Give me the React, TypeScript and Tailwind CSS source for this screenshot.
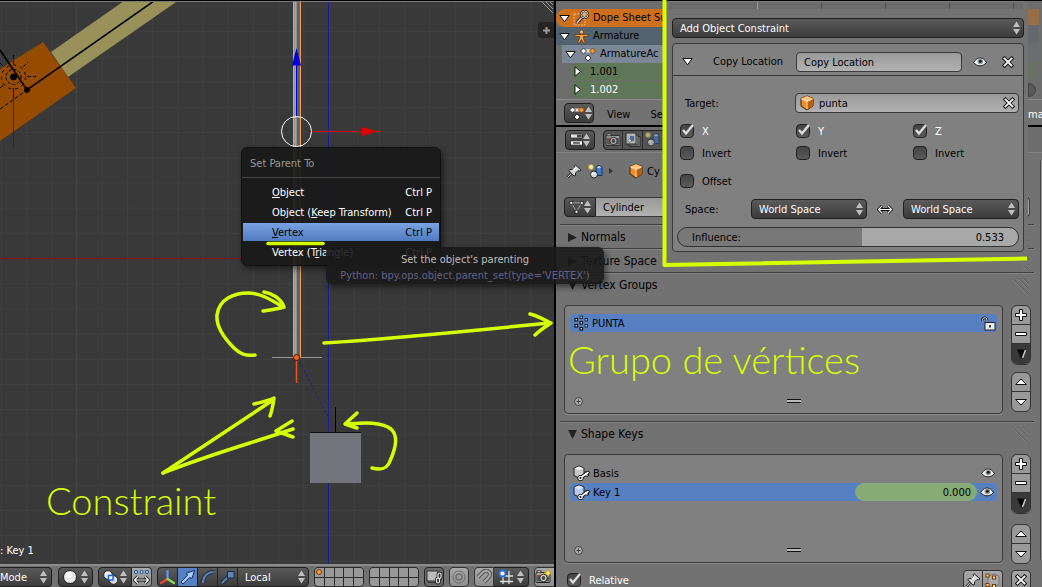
import type { ReactNode } from "react";

const FIELD = "rounded border border-[#3a3a3a] bg-linear-to-b from-[#999] to-[#b2b2b2] pt-px text-black";
const DARK = "rounded border border-[#1f1f1f] bg-linear-to-b from-[#5a5a5a] to-[#3c3c3c] text-white";
const LIGHT = "rounded border border-[#333] bg-linear-to-b from-[#a9a9a9] to-[#8e8e8e]";

function UpDown() {
  return (
    <svg width="7" height="14" viewBox="0 0 7 14" className="pointer-events-none shrink-0" fill="#c0c0c0">
      <path d="M0 6 3.5 0.5 7 6zM0 8h7L3.5 13.5z" />
    </svg>
  );
}

function Cube({ fill = "#f08a24", top = "#ffc27a", side = "#b85f0c" }: { fill?: string; top?: string; side?: string }) {
  return (
    <svg width="14" height="16" viewBox="0 0 14 16" className="shrink-0" stroke="#3a2208" strokeWidth="1" strokeLinejoin="round">
      <path d="M7 1 13 3.5V11L7 15 1 11V3.5z" fill={fill} />
      <path d="M7 1 13 3.5 7 6.5 1 3.5z" fill={top} stroke="none" />
      <path d="M7 6.5 13 3.8V11L7 15z" fill={side} stroke="none" />
      <path d="M1.5 4 7 6.5 12.5 4M7 6.5V14" stroke="#fff0dc" strokeWidth=".9" fill="none" />
    </svg>
  );
}

function ShapeKeyIcon({ blue }: { blue?: boolean }) {
  return (
    <svg width="17" height="17" viewBox="0 0 17 17" className="shrink-0" strokeLinejoin="round">
      <path d="M6 1 11 3V10L6 13 1 10.500V3z" fill={blue ? "#b9c9ea" : "#c9c9c9"} stroke="#222" />
      <path d="M6 1.500 10.500 3.300 6 5.500 1.500 3.300z" fill={blue ? "#dbe6fa" : "#eee"} />
      <path d="M8 12.500 15 7.500M13 8 14.500 10" stroke="#111" strokeWidth="3.400" strokeLinecap="round" />
      <circle cx="7.500" cy="13" r="3" fill="#111" />
      <path d="M8 12.500 15 7.500M12.500 8.500 14 10" stroke="#fff" strokeWidth="1.600" strokeLinecap="round" />
      <circle cx="7.500" cy="13" r="1.700" fill="#111" stroke="#fff" strokeWidth="1.300" />
    </svg>
  );
}

function Eye() {
  return (
    <svg width="14" height="10" viewBox="0 0 14 10" className="shrink-0">
      <path d="M.7 5.500C3 1.800 5 1 7.200 1 10 1 12 3 13.500 5.500 11.500 7.800 9.500 8.800 7 8.800 4.500 8.800 2.500 7.800.7 5.500z" fill="#f2f2f2" stroke="#222" />
      <circle cx="7.300" cy="4.500" r="2.800" fill="#8b9499" />
      <circle cx="7.300" cy="4.300" r="1.400" fill="#111" />
    </svg>
  );
}

function Cross() {
  return (
    <svg width="12" height="12" viewBox="0 0 12 12" className="shrink-0" strokeLinecap="square">
      <path d="M2.500 2.500 9.500 9.500M9.500 2.500 2.500 9.500" stroke="#111" strokeWidth="3.800" />
      <path d="M2.500 2.500 9.500 9.500M9.500 2.500 2.500 9.500" stroke="#f4f4f4" strokeWidth="1.900" />
    </svg>
  );
}

function Pin() {
  return (
    <svg width="17" height="16" viewBox="0 0 17 16" className="shrink-0" stroke="#222" strokeLinejoin="round">
      <path d="M1.500 14.500 6 9.500" strokeWidth="2.400" />
      <path d="M1.500 14.500 6 9.500" stroke="#eee" strokeWidth="1" />
      <path d="M9 1.500 15 7 13.500 8 12 7.500 9.500 10 9.500 12.500 8 13 2.800 7.500 4 6.500 6.500 6.700 9 4.300 8.200 2.500z" fill="#d8d8d8" />
      <path d="M9.500 4.500 7 7.200" stroke="#fff" strokeWidth="1.400" />
    </svg>
  );
}

function SceneIcon() {
  return (
    <svg width="15" height="15" viewBox="0 0 15 15" className="shrink-0">
      <circle cx="3" cy="3" r="2.500" fill="#f3ee9a" stroke="#a89e30" strokeWidth=".8" />
      <path d="M8 3 11 1.500 14 3V11.500H8z" fill="#3f78c8" stroke="#16325d" />
      <path d="M8.500 3.200 11 2 13.500 3.200 11 4.500z" fill="#b8d4f8" />
      <circle cx="6" cy="10.500" r="3.500" fill="#ddd" stroke="#222" />
      <circle cx="5" cy="9.300" r="1.300" fill="#fff" />
    </svg>
  );
}

function CameraIcon({ spark }: { spark?: boolean }) {
  return (
    <svg width="17" height="16" viewBox="0 0 17 16" className="shrink-0">
      <rect x="1" y="3.500" width="14" height="10" rx="1" fill="#b9b9b9" stroke="#222" />
      <rect x="2" y="1.800" width="4" height="2" fill="#e6e6e6" stroke="#222" strokeWidth=".8" />
      <rect x="2" y="6" width="12" height="6.500" fill="#555" />
      <circle cx="8.500" cy="9" r="3.700" fill="#ddd" stroke="#222" />
      <circle cx="8.500" cy="9" r="1.900" fill="#444" />
      <circle cx="3.500" cy="6.500" r=".9" fill="#d33" />
      {spark && <path d="M13 0 14.200 2.800 17 4 14.200 5.200 13 8 11.800 5.200 9 4 11.800 2.800z" fill="#ffe45a" stroke="#c59310" strokeWidth=".6" />}
    </svg>
  );
}

function KeysIcon() {
  return (
    <svg width="16" height="16" viewBox="0 0 16 16" className="shrink-0" stroke="#222" strokeWidth=".9">
      <path d="M3 5H12" stroke="#e8e0d0" strokeWidth="3" />
      <path d="M3.500 2 6.500 5 3.500 8 .5 5z" fill="#fff" />
      <path d="M12.500 2 15.500 5 12.500 8 9.500 5z" fill="#f39a3c" stroke="#7a3d05" />
      <path d="M8 9 11 12 8 15 5 12z" fill="#fff" />
    </svg>
  );
}

function Disclosure({ open }: { open?: boolean }) {
  return (
    <svg width="11" height="11" viewBox="0 0 11 11" className="shrink-0" fill="#fff" stroke="#111" strokeLinejoin="round">
      <path d={open ? "M.8 2.500H10.200L5.500 8.800z" : "M3 .7V10.300L8.500 5.500z"} />
    </svg>
  );
}

function Grip() {
  return (
    <svg width="18" height="18" viewBox="0 0 18 18" className="shrink-0" stroke="#5c5c5c" strokeWidth=".8">
      <path d="M0 0 17 17M6 0 17 11M11 0 17 6" />
      <path d="M0 1 16 17M6 1 17 12M11 1 17 7" stroke="#8d8d8d" strokeWidth=".6" />
    </svg>
  );
}

function Check({ label, on, id }: { label: string; on?: boolean; id: string }) {
  return (
    <div className="flex h-4 items-center gap-2">
      <span className="relative block size-3.5">
        <input id={id} type="checkbox" defaultChecked={on} className="peer block size-3.5 appearance-none rounded border border-[#222] bg-linear-to-b from-[#444] to-[#5a5a5a]" />
        <svg viewBox="0 0 16 16" className="pointer-events-none absolute inset-0 hidden size-4 peer-checked:block" fill="none">
          <path d="M3 6 6 9.500 13 1" stroke="#dedede" strokeWidth="2.400" />
        </svg>
      </span>
      <label htmlFor={id} className={on ? "pt-0.5 text-white" : "pt-0.5 text-black"}>{label}</label>
    </div>
  );
}

function SpaceSelect({ label }: { label: string }) {
  return (
    <div className="relative w-[116px]">
      <select aria-label={label} className={`${DARK} block h-5 w-full appearance-none px-[7px] pt-px`}>
        <option>World Space</option>
      </select>
      <span className="absolute top-[3px] right-1"><UpDown /></span>
    </div>
  );
}

function MenuItem({ children, active }: { children: ReactNode; active?: boolean }) {
  return (
    <li className="px-px">
      <button
        type="button"
        className={
          active
            ? "flex h-[18px] w-full items-center justify-between bg-linear-to-b from-[#7ba3e2] to-[#4f7bc0] pt-0.5 pr-[7px] pl-[29px] text-black"
            : "flex h-[18px] w-full items-center justify-between pt-0.5 pr-[7px] pl-[29px] text-white"
        }
      >
        <span>{children}</span>
        <span>Ctrl P</span>
      </button>
    </li>
  );
}

function Scene() {
  return (
    <svg className="absolute inset-0 size-full">
      <defs>
        <pattern id="grid" x="1" y="6" width="25.200" height="25.200" patternUnits="userSpaceOnUse">
          <path d="M.5 0V25.200M0 .5H25.200" stroke="#3f3f3f" />
        </pattern>
        <linearGradient id="rod">
          <stop offset="0" stopColor="#777" />
          <stop offset=".35" stopColor="#aaa" />
          <stop offset=".6" stopColor="#55555f" />
          <stop offset="1" stopColor="#77777f" />
        </linearGradient>
      </defs>
      <g transform="translate(0 -2)">
        <rect width="100%" height="110%" fill="url(#grid)" />
        <path d="M76.500 0V2000" stroke="#444" />
        <path d="M0 258.500H3000" stroke="#8a1212" />
        <path d="M328.500 0V2000" stroke="#1c1c96" />
        <path d="M124 1 179 0 68 77 51 52z" fill="#98915a" />
        <path d="M0 69 43 42 76 88 0 141z" fill="#954b00" />
        <path d="M13.500 88V148" stroke="#3a2a1a" />
        <g stroke="#000" fill="none">
          <path d="M0 50 27 90 154 1" strokeWidth="1.600" />
          <circle cx="13.500" cy="77" r="7.500" strokeDasharray="3 2" />
          <circle cx="13.500" cy="77" r="12" strokeDasharray="3 4" />
          <path d="M13.500 55V64M13.500 88V100M27 76.500H36M23 67 28 62M0 63 4 67M0 88 4 85M0 109 27 90" strokeDasharray="4 2" />
          <circle cx="13.500" cy="77" r="3" fill="#000" />
          <circle cx="27" cy="90" r="2.500" fill="#000" />
        </g>
        <rect x="293" y="0" width="8" height="357" fill="url(#rod)" />
        <path d="M293.500 0V357M300.500 0V357" stroke="#f5a040" />
        <path d="M296.500 64V116" stroke="#0000dc" />
        <path d="M296.500 48 301 65.500H292z" fill="#0000dc" />
        <circle cx="296.500" cy="131.500" r="15" fill="none" stroke="#fff" />
        <path d="M312 131.500H381" stroke="#dc0000" />
        <path d="M362 127 378 131.500 362 136z" fill="#dc0000" />
        <path d="M272 357.500H322" stroke="#999" />
        <path d="M296.500 360V383" stroke="#e8541e" strokeWidth="1.500" />
        <circle cx="296.500" cy="357.500" r="3" fill="#f0641e" stroke="#401500" />
        <path d="M299 361 334 428" stroke="#22227a" strokeDasharray="3 2" />
        <path d="M335.500 407V432" stroke="#000" />
        <rect x="310" y="432" width="51" height="51" fill="#74747d" />
        <path d="M310 432.500H361" stroke="#111" />
      </g>
    </svg>
  );
}

function Annotations() {
  return (
    <svg className="pointer-events-none absolute inset-0 z-40 size-full" fill="none" stroke="#d7ff00" strokeWidth="3.500" strokeLinecap="round" strokeLinejoin="round">
      <path d="M255 355C245 356 240 354 234 348 224 338 216 326 217 315 219 299 234 293 248 293 260 293 270 299 283 307M264 292C271 293 281 298 284 307 278 309 270 310 263 311" />
      <path d="M324 343C400 338 480 330 549 323M530 314C538 316 545 320 551 323 545 327 540 330 535 335" />
      <path d="M372 468C380 470 387 470 390 461 395 450 399 436 391 429 380 421 362 423 345 424M357 413 345 424 357 428" />
      <path d="M163 473 273 400M254 404C262 402 268 401 274 398 273 405 272 411 270 416" />
      <path d="M163 473C205 456 245 445 293 429M292 421 276 431 293 437" />
      <path d="M268 243.500H323" />
      <path d="M664.500 0V265L1027 258.500" strokeWidth="4" strokeLinecap="butt" />
    </svg>
  );
}

function LayerGrid({ first }: { first?: boolean }) {
  return (
    <div className="grid h-5 w-[50px] grid-cols-5 grid-rows-2 gap-px overflow-hidden rounded border border-[#2b2b2b] bg-[#2b2b2b]">
      {Array.from({ length: 10 }, (_, i) => (
        <button key={i} type="button" aria-label={`Layer ${i + 1}`} className="flex items-center justify-center bg-[#999]">
          {first && i === 0 && <span className="size-1.5 rounded-full border border-[#7a3a00] bg-[#f5a040]" />}
        </button>
      ))}
    </div>
  );
}

function ViewHeader() {
  return (
    <footer className="relative flex h-[23px] shrink-0 items-start gap-[5px] overflow-hidden border-t-2 border-[#8c8c8c] bg-[#727272] pt-px *:shrink-0">
      <button type="button" className={`${DARK} mr-px flex h-5 w-[52px] items-center justify-between rounded-l-none border-l-0 pr-1`}>
        <span className="pt-0.5">Mode</span> <UpDown />
      </button>
      <button type="button" aria-label="Viewport shading" className={`${DARK} flex h-5 w-[35px] items-center justify-between px-1`}>
        <svg width="14" height="14" viewBox="0 0 14 14"><circle cx="7" cy="7" r="6.500" fill="#e9e9e9" stroke="#222" /><circle cx="5.500" cy="5" r="3" fill="#fff" /></svg>
        <UpDown />
      </button>
      <div className="flex">
        <button type="button" aria-label="Pivot point" className={`${DARK} flex h-5 w-[34px] items-center justify-between rounded-r-none px-1`}>
          <svg width="15" height="15" viewBox="0 0 15 15" stroke="#222">
            <circle cx="5" cy="5" r="4.300" fill="#eee" /><circle cx="10.500" cy="10" r="4.300" fill="#ddd" />
            <rect x="5.500" y="5.500" width="4.500" height="4.500" fill="#fff" stroke="#1b66d8" strokeWidth="1.500" />
          </svg>
          <UpDown />
        </button>
        <button type="button" aria-label="Manipulate centers" className={`${LIGHT} flex h-5 w-5 items-center justify-center rounded-l-none border-l-0`}>
          <svg width="17" height="17" viewBox="0 0 17 17" fill="none">
            <g fill="#bcd6ff" stroke="#174a94"><circle cx="3" cy="3" r="1.600" /><circle cx="8.500" cy="3" r="1.600" /><circle cx="14" cy="3" r="1.600" /></g>
            <path d="M2 11H15M5 7.500 1.500 11 5 14.500M12 7.500 15.500 11 12 14.500" stroke="#111" strokeWidth="3" />
            <path d="M2 11H15M5 7.500 1.500 11 5 14.500M12 7.500 15.500 11 12 14.500" stroke="#fff" strokeWidth="1.200" />
          </svg>
        </button>
      </div>
      <div className="flex overflow-hidden rounded border border-[#1f1f1f] bg-linear-to-b from-[#5a5a5a] to-[#3c3c3c] text-white">
        <button type="button" aria-label="Manipulator" className="flex h-[18px] w-[19px] items-center justify-center">
          <svg width="17" height="17" viewBox="0 0 17 17" strokeWidth="2.200" strokeLinecap="round">
            <path d="M8.500 10V2" stroke="#5a9cff" /><path d="M8.500 10 2 14" stroke="#f04438" /><path d="M8.500 10 15 14" stroke="#8fe04a" />
          </svg>
        </button>
        <button type="button" aria-label="Translate" className="flex h-[18px] w-5 items-center justify-center border-l border-[#222] bg-[#5680c2]">
          <svg width="16" height="16" viewBox="0 0 16 16"><path d="M6.500 4 14.500 1.500 12 9.500 9.800 8.500 3 15 1 13 7.500 6.300z" fill="#a8cbff" stroke="#102f63" /></svg>
        </button>
        <button type="button" aria-label="Rotate" className="flex h-[18px] w-5 items-center justify-center border-l border-[#222]">
          <svg width="16" height="16" viewBox="0 0 16 16" fill="none"><path d="M3 14C3 8 7 3 13.500 3" stroke="#1b2a42" strokeWidth="4" /><path d="M3 14C3 8 7 3 13.500 3" stroke="#6384b4" strokeWidth="2" /></svg>
        </button>
        <button type="button" aria-label="Scale" className="flex h-[18px] w-5 items-center justify-center border-l border-[#222]">
          <svg width="16" height="16" viewBox="0 0 16 16"><path d="M2 14 9 7" stroke="#1b2a42" strokeWidth="4" /><path d="M2 14 9 7" stroke="#6384b4" strokeWidth="2" /><rect x="7.500" y="2.500" width="6.500" height="6.500" fill="#6384b4" stroke="#1b2a42" /></svg>
        </button>
        <div className="relative border-l border-[#222]">
          <select aria-label="Transform orientation" className="block h-[18px] w-[70px] appearance-none bg-transparent pt-px pl-[7px]"><option>Local</option></select>
          <span className="absolute top-[2px] right-[3px]"><UpDown /></span>
        </div>
      </div>
      <LayerGrid first />
      <LayerGrid />
      <button type="button" aria-label="Lock camera to view" className="flex size-5 items-center justify-center rounded border border-[#222] bg-[#6a6a6a]">
        <svg width="17" height="16" viewBox="0 0 17 16" fill="none"><rect x="1" y="2" width="11" height="10" fill="#bbb" stroke="#333" /><path d="M2 13.500H9" stroke="#333" /><g stroke="#222" strokeWidth="2.800"><rect x="12" y="4" width="3" height="5.500" rx="1.500" /><rect x="10.500" y="9" width="3" height="5" rx="1.500" /></g><g stroke="#eee" strokeWidth="1.200"><rect x="12" y="4" width="3" height="5.500" rx="1.500" /><rect x="10.500" y="9" width="3" height="5" rx="1.500" /></g></svg>
      </button>
      <button type="button" aria-label="Proportional editing" className={`${LIGHT} flex size-5 items-center justify-center`}>
        <svg width="14" height="14" viewBox="0 0 14 14" fill="none" stroke="#6f6f6f"><circle cx="7" cy="7" r="6" /><circle cx="7" cy="7" r="3" strokeWidth="1.500" /></svg>
      </button>
      <div className="flex">
        <button type="button" aria-label="Snap" className={`${LIGHT} flex size-5 items-center justify-center rounded-r-none`}>
          <svg width="16" height="16" viewBox="0 0 16 16" fill="none"><path d="M2 8 7 3C9.500.8 13 1.500 14 4.500 14.500 6.500 13 8 12 9L8 13" stroke="#555" strokeWidth="4.200" /><path d="M2 8 7 3C9.500.8 13 1.500 14 4.500 14.500 6.500 13 8 12 9L8 13" stroke="#aaa" strokeWidth="2" /></svg>
        </button>
        <button type="button" aria-label="Snap element" className={`${DARK} flex h-5 w-[35px] items-center justify-between rounded-l-none border-l-0 px-1`}>
          <svg width="16" height="16" viewBox="0 0 16 16" fill="none"><path d="M5 4V15M11 2V15M2 7H15M2 12.500H15" stroke="#ddd" strokeWidth="1.300" /><circle cx="4.500" cy="4.500" r="3" fill="#fff" stroke="#2474e8" strokeWidth="1.800" /></svg>
          <UpDown />
        </button>
      </div>
      <button type="button" aria-label="Render" className={`${LIGHT} flex h-5 w-6 shrink-0 items-center`}><CameraIcon spark /></button>
    </footer>
  );
}

function Viewport() {
  return (
    <main className="relative z-10 flex min-w-0 flex-1 flex-col border-t border-r-2 border-black bg-[#393939]">
      <section className="relative flex flex-1 flex-col border-t border-[#7a7a7a]">
        <Scene />
        <svg width="13" height="12" viewBox="0 0 13 12" className="absolute top-0 right-0" stroke="#999"><path d="M1 0 12 11M5 0 12 7M9 0 12 3" /></svg>
        <button type="button" className="absolute top-5 right-0 flex size-4 items-center justify-center rounded-l bg-[#252525]" aria-label="Show properties">
          <svg width="7" height="7" viewBox="0 0 7 7" stroke="#999" strokeWidth="2"><path d="M3.500 0V7M0 3.500H7" /></svg>
        </button>
        <p className="relative mt-auto pb-[5px] text-white">: Key 1</p>
        <div className="absolute top-[145px] left-[241px] w-[200px] rounded-md border border-[#111] bg-[#191919]/94 pb-1 shadow-[2px_3px_6px_rgba(0,0,0,0.5)]">
          <h2 className="flex h-[30px] items-center border-b border-[#444] pt-0.5 pl-2 text-[#999]">Set Parent To</h2>
          <ul className="mt-[5px] flex flex-col gap-0.5">
            <MenuItem><u>O</u>bject</MenuItem>
            <MenuItem>Object (<u>K</u>eep Transform)</MenuItem>
            <MenuItem active><u>V</u>ertex</MenuItem>
            <MenuItem>Vertex (T<u>r</u>iangle)</MenuItem>
          </ul>
        </div>
        <div role="tooltip" className="absolute top-[245px] left-[326px] flex h-[37px] w-[278px] flex-col items-center justify-center rounded-md bg-[#191919]/90 pt-[5px] text-center whitespace-nowrap shadow-[2px_3px_6px_rgba(0,0,0,0.5)]">
          <p className="h-[17px] text-[#bcbcbc]">Set the object's parenting</p>
          <p className="h-[17px] text-[#626088]">Python: bpy.ops.object.parent_set(type='VERTEX')</p>
        </div>
      </section>
      <ViewHeader />
    </main>
  );
}

function DopeSheet() {
  return (
    <section className="flex h-[127px] shrink-0 flex-col border-t border-b-2 border-black bg-[#6d6d6d]">
      <div className="flex flex-1 pt-2">
        <ul className="flex w-[110px] flex-col overflow-hidden whitespace-nowrap text-black">
          <li className="flex h-[18px] items-center gap-[3px] rounded-l-full bg-[#cd6f1b] pl-[3px]">
            <Disclosure open />
            <svg width="17" height="16" viewBox="0 0 17 16" fill="none" className="shrink-0"><rect x="1" y="4" width="11" height="11" stroke="#f7b77a" strokeDasharray="2 1" /><path d="M4 13 9 7" stroke="#222" strokeWidth="3.400" /><path d="M4 13 9 7" stroke="#ddd" strokeWidth="1.400" /><circle cx="11.500" cy="4.500" r="3.500" fill="#e4a878" stroke="#222" strokeWidth="2.200" /><circle cx="11.500" cy="4.500" r="3.500" stroke="#ddd" strokeWidth=".9" /></svg>
            Dope Sheet Su
          </li>
          <li className="flex h-[18px] items-center gap-1 bg-[#52626f] pl-[3px]">
            <Disclosure open />
            <svg width="15" height="15" viewBox="0 0 15 15" className="shrink-0"><circle cx="7.500" cy="3" r="2" fill="#ffbe78" stroke="#6b3404" strokeWidth=".8" /><path d="M1 5.500H14V7.500H9.500V9.500L11.500 14H9.500L7.500 10.500 5.500 14H3.500L5.500 9.500V7.500H1z" fill="#f9a54e" stroke="#6b3404" strokeWidth=".8" /></svg>
            Armature
          </li>
          <li className="ml-[6px] flex h-[18px] items-center gap-1 bg-[#7c8898] pl-[3px]">
            <Disclosure open />
            <KeysIcon />
            ArmatureAc
          </li>
          <li className="ml-[14px] flex h-[17px] items-center gap-[7px] rounded-l-full bg-[#5f7659] pl-[2px]"><Disclosure />1.001</li>
          <li className="ml-[14px] mt-px flex h-[17px] items-center gap-[7px] rounded-l-full bg-[#5f7659] pl-[2px] text-white"><Disclosure />1.002</li>
        </ul>
        <div className="mr-[3px] ml-auto flex w-[11px] flex-col">
          <span className="h-4 bg-[#966e48]" />
          <span className="h-[18px] bg-[#65696d]" />
          <span className="h-[18px] bg-[#6a6d70]" />
          <span className="h-[18px] bg-[#687066]" />
          <span className="mt-1 h-3.5 w-2 rounded-r-full border border-[#444] bg-[#595959]" />
        </div>
      </div>
      <div className="flex h-[26px] items-center border-t border-[#8b8b8b] bg-[#727272] pl-2 text-black">
        <button type="button" aria-label="Editor type" className={`${DARK} flex h-5 w-[30px] items-center justify-between px-1`}><KeysIcon /><UpDown /></button>
        <button type="button" className="ml-[13px] pt-1">View</button>
        <button type="button" className="ml-5 pt-1">Se</button>
        <span className="ml-auto w-[14px] overflow-hidden pt-1 text-white">ma</span>
      </div>
    </section>
  );
}

function PanelHead({ title, open }: { title: string; open?: boolean }) {
  return (
    <h2 className="mr-2 ml-[4px] flex h-6 shrink-0 items-center gap-1 border-t border-[#3f3f3f] pt-px pl-2 text-xs text-black shadow-[inset_0_1px_0_#868686]">
      <svg width="9" height="9" viewBox="0 0 9 9" fill="#222"><path d={open ? "M0 0H9L4.500 9z" : "M0 0V9L9 4.500z"} /></svg>
      {title}
      <span className="mt-1 mr-1 ml-auto"><Grip /></span>
    </h2>
  );
}

function Glyph({ d }: { d: string }) {
  return <svg width="12" height="12" viewBox="0 0 12 12" fill="#fff" stroke="#111" strokeLinejoin="round"><path d={d} /></svg>;
}

function ListButtons({ gap }: { gap: string }) {
  const b = "flex h-[19px] w-[18px] items-center justify-center";
  return (
    <div className={`flex flex-col ${gap}`}>
      <div className="flex flex-col divide-y divide-[#333] overflow-hidden rounded-md border border-[#333] bg-[#999]">
        <button type="button" aria-label="Add" className={b}><Glyph d="M4.500.5H7.500V4.500H11.500V7.500H7.500V11.500H4.500V7.500H.5V4.500H4.500z" /></button>
        <button type="button" aria-label="Remove" className={b}><Glyph d="M.5 4.500H11.500V7.500H.5z" /></button>
        <button type="button" aria-label="Specials" className="flex h-[20px] w-[18px] items-center justify-center bg-[#3a3a3a]">
          <svg width="11" height="12" viewBox="0 0 11 12"><path d="M1 1.500H10L7 10.500H5z" fill="#080808" /><path d="M9.500 2 6.500 10" stroke="#ccc" strokeWidth="1.500" /></svg>
        </button>
      </div>
      <div className="flex flex-col divide-y divide-[#333] overflow-hidden rounded-md border border-[#333] bg-[#999]">
        <button type="button" aria-label="Move up" className={b}><Glyph d="M.7 8.500H11.300L6 3z" /></button>
        <button type="button" aria-label="Move down" className={b}><Glyph d="M.7 3.500H11.300L6 9z" /></button>
      </div>
    </div>
  );
}

function ListBox({ children }: { children: ReactNode }) {
  return (
    <div className="flex h-[109px] flex-1 flex-col rounded border border-[#3b3b3b] bg-[#808080] px-[5px] pt-2 shadow-[0_1px_0_#8b8b8b]">
      {children}
      <div className="relative mt-auto mb-[10px] flex items-center justify-center pl-5">
        <svg width="9" height="9" viewBox="0 0 9 9" fill="#aaa" stroke="#444" className="absolute left-[4px]"><circle cx="4.500" cy="4.500" r="4" /><path d="M4.500 2.500V6.500M2.500 4.500H6.500" /></svg>
        <span className="h-[4px] w-3.5 border-y border-[#111] bg-[#bbb]" />
      </div>
    </div>
  );
}

function Properties() {
  return (
    <section className="relative flex flex-1 flex-col overflow-hidden bg-[#727272]">
      <div className="flex h-[26px] shrink-0 items-center gap-2 border-b border-[#858585] bg-[#6d6d6d] pl-[9px]">
        <button type="button" aria-label="Editor type" className={`${DARK} flex h-5 w-[30px] items-center justify-between px-1`}>
          <svg width="15" height="15" viewBox="0 0 15 15"><rect x=".5" y="1" width="14" height="5" rx="1" fill="#ddd" stroke="#111" /><rect x="8" y="2" width="5.500" height="3" fill="#444" /><rect x=".5" y="9" width="14" height="5" rx="1" fill="#fff" stroke="#111" /><path d="M3.500 11.500H11.500" stroke="#222" strokeWidth="1.500" /></svg>
          <UpDown />
        </button>
        <nav className="flex divide-x divide-[#222] overflow-hidden rounded border border-[#222] bg-[#555]">
          <button type="button" aria-label="Render" className="flex h-[18px] w-[19px] items-center justify-center opacity-70"><CameraIcon /></button>
          <button type="button" aria-label="Render layers" className="flex h-[18px] w-[20px] items-center justify-center opacity-80">
            <svg width="16" height="16" viewBox="0 0 16 16" stroke="#222"><rect x="5" y="4.500" width="10" height="10" fill="#aaa" /><rect x="3" y="3" width="10" height="10" fill="#bbb" /><rect x="1" y="1" width="10" height="11" fill="#ccc" /><rect x="5" y="4" width="4" height="5" fill="#4672b0" stroke="none" /><circle cx="4.500" cy="8.500" r="1.700" fill="#fff" strokeWidth=".5" /></svg>
          </button>
          <button type="button" aria-label="Scene" className="flex h-[18px] w-[24px] items-center pl-0.5 opacity-60"><SceneIcon /></button>
        </nav>
      </div>
      <div className="flex h-9 shrink-0 items-center pl-[10px] text-black">
        <Pin />
        <span className="ml-[5px]"><SceneIcon /></span>
        <svg width="4" height="6" viewBox="0 0 4 6" fill="#333" className="ml-[6px]"><path d="M0 0V6L4 3z" /></svg>
        <span className="ml-4"><Cube /></span>
        <span className="ml-1 pt-0.5">Cy</span>
      </div>
      <div className="mt-2 mb-[7px] flex shrink-0 items-center pl-2">
        <button type="button" aria-label="Browse mesh" className={`${DARK} flex h-5 w-8 items-center justify-between rounded-r-none px-1`}>
          <svg width="16" height="15" viewBox="0 0 16 15" fill="#fff" stroke="#ddd"><path d="M2.500 2.500H13.500L8 12z" fill="none" stroke="#aaa" /><g stroke="#111" strokeWidth=".7"><rect x="1" y="1" width="3" height="3" /><rect x="12" y="1" width="3" height="3" /><rect x="6.500" y="10.500" width="3" height="3" /></g></svg>
          <UpDown />
        </button>
        <input aria-label="Mesh name" defaultValue="Cylinder" className={`${FIELD} h-5 min-w-0 flex-1 rounded-l-none border-l-0 px-[7px]`} />
        <span className="w-3" />
      </div>
      <PanelHead title="Normals" />
      <PanelHead title="Texture Space" />
      <PanelHead title="Vertex Groups" open />
      <div className="mt-[9px] flex shrink-0 items-start gap-2 pr-[11px] pl-2">
        <ListBox>
          <div className="flex h-[18px] items-center gap-[3px] rounded-sm bg-[#5680c2] pr-1 pl-1 text-black">
            <svg width="15" height="16" viewBox="0 0 15 16" fill="#fff" stroke="#111" className="shrink-0">
              <g strokeWidth="1.200"><rect x="1" y="3.500" width="2.500" height="2.500" /><rect x="1" y="9.500" width="2.500" height="2.500" /><rect x="6" y="6.500" width="2.500" height="2.500" /><rect x="6" y="12.500" width="2.500" height="2.500" /></g>
              <g fill="#a9c4ee" stroke="#1b2c4a"><rect x="6" y="1" width="2.500" height="2.500" /><rect x="11" y="3.500" width="2.500" height="2.500" /><rect x="11" y="9.500" width="2.500" height="2.500" /></g>
            </svg>
            <span className="flex-1 pt-0.5">PUNTA</span>
            <button type="button" aria-label="Unlock" className="-mr-[3px]">
              <svg width="15" height="15" viewBox="0 0 15 15" fill="none"><path d="M1.500 4.500C1 1.500 6 .5 6 4V7" stroke="#222" strokeWidth="2.600" /><path d="M1.500 4.500C1 1.500 6 .5 6 4V7" stroke="#ddd" /><rect x="4" y="6.500" width="10" height="7.500" fill="#e9e9e9" stroke="#222" /><path d="M9 9V11.500" stroke="#111" strokeWidth="1.500" /></svg>
            </button>
          </div>
        </ListBox>
        <ListButtons gap="gap-[7px]" />
      </div>
      <div className="mt-[7px] shrink-0"><PanelHead title="Shape Keys" open /></div>
      <div className="mt-[9px] flex shrink-0 items-start gap-2 pr-[11px] pl-2">
        <ListBox>
          <div className="flex h-5 items-center gap-[3px] pr-px pl-[3px] text-black">
            <ShapeKeyIcon />
            <span className="flex-1 pt-0.5">Basis</span>
            <span className="pr-px"><Eye /></span>
          </div>
          <div className="flex h-[18px] items-center gap-[3px] rounded-sm bg-[#5680c2] pr-[3px] pl-[3px] text-black">
            <ShapeKeyIcon blue />
            <label htmlFor="key-value" className="flex-1 pt-0.5">Key 1</label>
            <input id="key-value" defaultValue="0.000" className="h-[18px] w-[122px] rounded-full bg-[#86ab75] pt-px pr-[6px] text-right" />
            <Eye />
          </div>
        </ListBox>
        <ListButtons gap="gap-[10px]" />
      </div>
      <div className="mt-1.5 flex shrink-0 items-center pr-[11px] pl-[11px]">
        <Check id="relative" label="Relative" on />
        <div className="ml-auto flex">
          <button type="button" aria-label="Pin shape" className={`${LIGHT} flex size-5 items-center justify-center rounded-r-none`}><Pin /></button>
          <button type="button" aria-label="Shape key edit mode" className={`${LIGHT} flex size-5 items-center justify-center rounded-l-none border-l-0`}>
            <svg width="15" height="15" viewBox="0 0 15 15"><path d="M3 3 9 1 14 3V11L9 14 3 12z" fill="#aaa" stroke="#777" /><g fill="#ffd9a0" stroke="#7a3a00"><rect x="1" y="1" width="3" height="3" /><rect x="1" y="10.500" width="3" height="3" /><rect x="7.500" y="3" width="3" height="3" /><rect x="7.500" y="11.500" width="3" height="3" /></g></svg>
          </button>
        </div>
        <button type="button" aria-label="Clear" className={`${LIGHT} ml-2 flex size-5 items-center justify-center`}><Cross /></button>
      </div>
      <span className="absolute top-[33px] right-0 h-[400px] w-0.5 rounded-l border-l border-[#444] bg-[#999]" />
    </section>
  );
}

function ConstraintPanel() {
  return (
    <aside className="absolute top-0 right-[14px] h-[266px] w-[364px] border-t border-black bg-[#727272] px-[5px] text-black">
      <div className="flex h-2 overflow-hidden border-t border-[#808080] bg-[#6b6b6b] pl-[88px]">
        <span className="w-16 shrink-0 border-l border-[#66cc44]" />
        <span className="w-16 shrink-0 border-l border-[#555]" />
        <span className="w-16 shrink-0 border-l border-[#555]" />
        <span className="w-16 shrink-0 border-l border-[#555]" />
        <span className="w-px shrink-0 border-l border-[#555]" />
      </div>
      <button type="button" className={`${DARK} mt-[9px] ml-[3px] flex h-5 w-[352px] items-center justify-between pr-[3px] pl-[7px]`}>
        <span className="pt-0.5">Add Object Constraint</span> <UpDown />
      </button>
      <div className="mt-[5px] ml-[3px] w-[352px] rounded border border-[#3a3a3a] bg-[#808080]">
        <div className="flex h-8 items-center border-b border-[#3a3a3a] pt-1 pr-[9px] pl-[9px]">
          <Disclosure open />
          <label htmlFor="constraint-name" className="ml-5 w-[83px]">Copy Location</label>
          <input id="constraint-name" defaultValue="Copy Location" className={`${FIELD} h-5 w-[166px] px-[7px]`} />
          <span className="ml-auto"><Eye /></span>
          <span className="ml-[15px]"><Cross /></span>
        </div>
        <div className="flex flex-col pr-[4px] pl-[4px]">
          <div className="mt-[17px] flex items-center pl-2">
            <label htmlFor="target" className="flex-1 pt-0.5">Target:</label>
            <div className="relative w-[224px]">
              <input id="target" defaultValue="punta" className={`${FIELD} block h-5 w-full pl-[23px]`} />
              <span className="absolute top-[2px] left-[5px]"><Cube /></span>
              <span className="absolute top-[4px] right-[4px]"><Cross /></span>
            </div>
          </div>
          <div className="mt-[10px] grid grid-cols-[116px_117px_1fr] gap-y-[6px] pl-[3px] whitespace-nowrap">
            <Check id="x" label="X" on />
            <Check id="y" label="Y" on />
            <Check id="z" label="Z" on />
            <Check id="ix" label="Invert" />
            <Check id="iy" label="Invert" />
            <Check id="iz" label="Invert" />
          </div>
          <div className="mt-3 pl-[3px]"><Check id="offset" label="Offset" /></div>
          <div className="mt-[10px] flex items-center pl-2">
            <span className="flex-1 pt-0.5">Space:</span>
            <SpaceSelect label="Owner space" />
            <svg width="16" height="11" viewBox="0 0 16 11" fill="none" className="mx-[10px]">
              <path d="M2 5.500H14M5 2 1.500 5.500 5 9M11 2 14.500 5.500 11 9" stroke="#111" strokeWidth="3" />
              <path d="M2 5.500H14M5 2 1.500 5.500 5 9M11 2 14.500 5.500 11 9" stroke="#fff" strokeWidth="1.200" />
            </svg>
            <SpaceSelect label="Target space" />
          </div>
          <div className="mt-2 mb-1 flex h-5 items-center justify-between rounded-full border border-[#333] bg-linear-to-r from-[#787878] from-54% to-[#a8a8a8] to-54% px-[14px]">
            <label htmlFor="influence" className="pt-0.5">Influence:</label>
            <input id="influence" defaultValue="0.533" className="w-12 bg-transparent pt-0.5 text-right" />
          </div>
        </div>
      </div>
    </aside>
  );
}

export default function App() {
  return (
    <div className="relative flex h-screen overflow-hidden bg-[#727272] font-['DejaVu_Sans_Condensed','DejaVu_Sans',sans-serif] text-[11px] leading-4">
      <Viewport />
      <div className="relative flex w-[486px] shrink-0 flex-col">
        <DopeSheet />
        <Properties />
        <ConstraintPanel />
        <p className="absolute top-[335px] left-3 font-['Lato',sans-serif] text-[38px] leading-12 font-light whitespace-nowrap text-[#d7ff00]">Grupo de vértices</p>
      </div>
      <p className="absolute top-[476px] left-[46px] z-40 font-['Lato',sans-serif] text-[38px] leading-12 font-light text-[#d7ff00]">Constraint</p>
      <Annotations />
    </div>
  );
}
